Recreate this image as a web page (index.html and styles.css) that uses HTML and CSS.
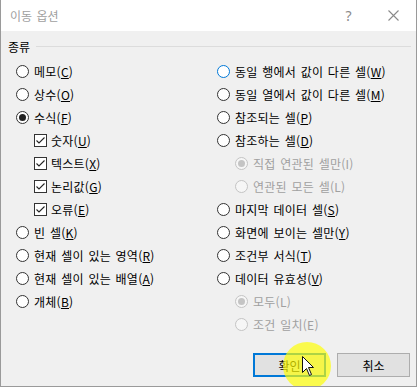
FILE: index.html
```html
<!DOCTYPE html>
<html lang="ko">
<head>
<meta charset="utf-8">
<title>이동 옵션</title>
<link rel="stylesheet" href="styles.css">
</head>
<body>
<div class="dialog">
  <div class="titlebar">
    <span class="title">이동 옵션</span>
    <span class="help">?</span>
    <span class="close"><svg width="11" height="11" viewBox="0 0 11 11"><path d="M0.5 0.5 L10.5 10.5 M10.5 0.5 L0.5 10.5" stroke="#8a8a8a" stroke-width="1.1" fill="none"/></svg></span>
  </div>
  <div class="body">
    <div class="group-head"><span class="group-label">종류</span><span class="rule"></span></div>
    <div class="cols">
      <ul class="col col-left">
        <li class="opt"><span class="radio"></span><span>메모(<u>C</u>)</span></li>
        <li class="opt"><span class="radio"></span><span>상수(<u>O</u>)</span></li>
        <li class="opt"><span class="radio checked"></span><span>수식(<u>F</u>)</span></li>
        <li class="opt sub"><span class="check"><svg width="11" height="11" viewBox="0 0 11 11"><path d="M1.5 5.5 L4 8 L9.5 2.5" stroke="#222" stroke-width="1.1" fill="none"/></svg></span><span>숫자(<u>U</u>)</span></li>
        <li class="opt sub"><span class="check"><svg width="11" height="11" viewBox="0 0 11 11"><path d="M1.5 5.5 L4 8 L9.5 2.5" stroke="#222" stroke-width="1.1" fill="none"/></svg></span><span>텍스트(<u>X</u>)</span></li>
        <li class="opt sub"><span class="check"><svg width="11" height="11" viewBox="0 0 11 11"><path d="M1.5 5.5 L4 8 L9.5 2.5" stroke="#222" stroke-width="1.1" fill="none"/></svg></span><span>논리값(<u>G</u>)</span></li>
        <li class="opt sub"><span class="check"><svg width="11" height="11" viewBox="0 0 11 11"><path d="M1.5 5.5 L4 8 L9.5 2.5" stroke="#222" stroke-width="1.1" fill="none"/></svg></span><span>오류(<u>E</u>)</span></li>
        <li class="opt"><span class="radio"></span><span>빈 셀(<u>K</u>)</span></li>
        <li class="opt"><span class="radio"></span><span>현재 셀이 있는 영역(<u>R</u>)</span></li>
        <li class="opt"><span class="radio"></span><span>현재 셀이 있는 배열(<u>A</u>)</span></li>
        <li class="opt"><span class="radio"></span><span>개체(<u>B</u>)</span></li>
      </ul>
      <ul class="col col-right">
        <li class="opt"><span class="radio focus"></span><span>동일 행에서 값이 다른 셀(<u>W</u>)</span></li>
        <li class="opt"><span class="radio"></span><span>동일 열에서 값이 다른 셀(<u>M</u>)</span></li>
        <li class="opt"><span class="radio"></span><span>참조되는 셀(<u>P</u>)</span></li>
        <li class="opt"><span class="radio"></span><span>참조하는 셀(<u>D</u>)</span></li>
        <li class="opt sub disabled"><span class="radio checked"></span><span>직접 연관된 셀만(I)</span></li>
        <li class="opt sub disabled"><span class="radio"></span><span>연관된 모든 셀(L)</span></li>
        <li class="opt"><span class="radio"></span><span>마지막 데이터 셀(<u>S</u>)</span></li>
        <li class="opt"><span class="radio"></span><span>화면에 보이는 셀만(<u>Y</u>)</span></li>
        <li class="opt"><span class="radio"></span><span>조건부 서식(<u>T</u>)</span></li>
        <li class="opt"><span class="radio"></span><span>데이터 유효성(<u>V</u>)</span></li>
        <li class="opt sub disabled"><span class="radio checked"></span><span>모두(L)</span></li>
        <li class="opt sub disabled"><span class="radio"></span><span>조건 일치(E)</span></li>
      </ul>
    </div>
    <div class="buttons">
      <button class="btn btn-default">확인</button>
      <button class="btn">취소</button>
    </div>
    <div class="spotlight"></div>
    <svg class="cursor" width="13" height="21" viewBox="0 0 13 21"><path d="M0.5 0.5 L0.5 16.5 L4.5 12.5 L7.5 19.5 L9.5 18.5 L6.5 11.5 L11.5 11.5 Z" fill="#fff" stroke="#111" stroke-width="1" stroke-linejoin="miter"/></svg>
  </div>
</div>
</body>
</html>
```
FILE: styles.css
```css
* { box-sizing: border-box; }
html, body {
  margin: 0;
  padding: 0;
  background: #ffffff;
}
body {
  font-family: "Malgun Gothic", "Noto Sans CJK KR", sans-serif;
  font-size: 12px;
  color: #000;
}
.dialog {
  width: 417px;
  height: 387px;
  border: 1px solid #9a9a9a;
  border-top: none;
  background: #f0f0f0;
  display: flex;
  flex-direction: column;
  overflow: hidden;
}
.titlebar {
  height: 31px;
  background: #fff;
  display: flex;
  align-items: center;
  flex: none;
}
.title {
  flex: 1;
  padding-left: 9px;
  color: #a0a0a0;
  font-size: 12px;
  word-spacing: 1px;
}
.help {
  width: 46px;
  padding-left: 3px;
  text-align: center;
  color: #8a8a8a;
  font-family: "Segoe UI", "Noto Sans", sans-serif;
  font-size: 14px;
}
.close {
  width: 46px;
  display: flex;
  justify-content: center;
  align-items: center;
}
.body {
  position: relative;
  flex: 1;
  display: flex;
  flex-direction: column;
}
.group-head {
  margin-top: 7px;
  height: 16px;
  display: flex;
  align-items: center;
  padding-left: 7px;
  padding-right: 5px;
}
.rule {
  flex: 1;
  height: 1px;
  background: #dcdcdc;
  margin-left: 6px;
}
.cols {
  margin-top: 6px;
  display: flex;
  padding-left: 15px;
}
.col {
  list-style: none;
  margin: 0;
  padding: 0;
}
.col-left { width: 201px; }
.opt {
  height: 23px;
  display: flex;
  align-items: center;
  gap: 4px;
  white-space: nowrap;
  letter-spacing: 0.25px;
  word-spacing: 1px;
}
.opt.sub { padding-left: 18px; }
.opt u { text-decoration: underline; text-underline-offset: 1px; }
.radio {
  width: 13px;
  height: 13px;
  border-radius: 50%;
  border: 1px solid #333;
  background: #fff;
  position: relative;
  flex: none;
  margin-right: 1px;
}
.radio.focus { border-color: #0078d7; }
.radio.checked::after {
  content: "";
  position: absolute;
  left: 2px;
  top: 2px;
  width: 7px;
  height: 7px;
  border-radius: 50%;
  background: #222;
}
.check {
  width: 13px;
  height: 13px;
  border: 1px solid #333;
  background: #fff;
  display: flex;
  align-items: center;
  justify-content: center;
  flex: none;
}
.disabled { color: #a0a0a0; }
.disabled .radio { border-color: #c4c4c4; background: #f6f6f6; }
.disabled .radio.checked::after { background: #c4c4c4; }
.buttons {
  margin-top: 17px;
  display: flex;
  justify-content: flex-end;
  gap: 11px;
  padding-right: 6px;
}
.btn {
  width: 73px;
  height: 24px;
  background: #e1e1e1;
  border: 1px solid #adadad;
  font-family: inherit;
  font-size: 12px;
  color: #000;
  padding: 0;
}
.btn-default { border: 2px solid #0078d7; }
.spotlight {
  position: absolute;
  left: 282px;
  top: 311px;
  width: 48px;
  height: 48px;
  border-radius: 50%;
  background: rgba(255, 255, 0, 0.68);
  pointer-events: none;
}
.cursor {
  position: absolute;
  left: 301px;
  top: 325px;
}
```
